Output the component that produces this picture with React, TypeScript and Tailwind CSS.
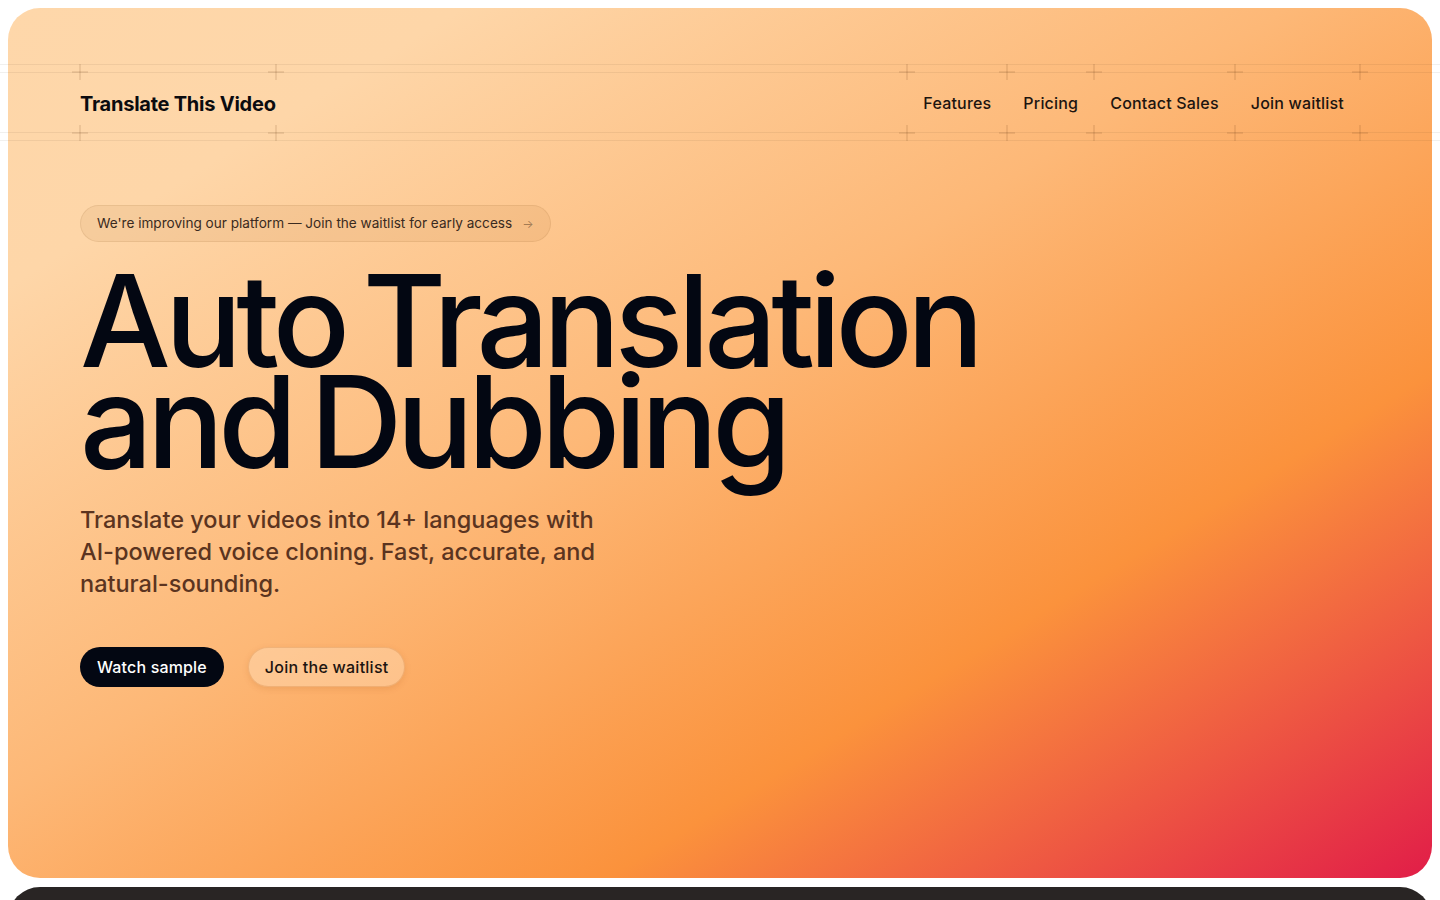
import React from 'react';

// small plus mark that sits on the header grid lines
const Cross = ({ className = '' }: { className?: string }) => (
    <span className={`pointer-events-none absolute h-4 w-4 ${className}`}>
        <span className="absolute left-1/2 top-0 h-4 w-px -translate-x-1/2 bg-[rgba(90,50,10,0.22)]" />
        <span className="absolute left-0 top-1/2 h-px w-4 -translate-y-1/2 bg-[rgba(90,50,10,0.22)]" />
    </span>
);

const Corners = ({ right = false }: { right?: boolean }) => (
    <>
        <Cross className="-left-2 -top-2" />
        <Cross className="-bottom-2 -left-2" />
        {right && <Cross className="-right-2 -top-2" />}
        {right && <Cross className="-bottom-2 -right-2" />}
    </>
);

const navItems = ['Features', 'Pricing', 'Contact Sales', 'Join waitlist'];

export default function App() {
    return (
        <div
            className="min-h-screen bg-white p-2 pb-0"
            style={{ fontFamily: 'Inter, "Noto Sans", sans-serif' }}
        >
            {/* ================= hero card ================= */}
            <section className="relative h-[870px] rounded-[32px] bg-[linear-gradient(to_bottom_right,#fed7aa_0%,#fed6a8_16%,#fdb877_45%,#fb923c_71%,#e11d48_100%)] px-[72px] pt-16">
                {/* header band with grid lines */}
                <header className="relative flex h-[61px] items-stretch justify-between">
                    <span className="pointer-events-none absolute -left-[80px] -right-[80px] -top-2 h-px bg-[rgba(60,40,20,0.07)]" />
                    <span className="pointer-events-none absolute -left-[80px] -right-[80px] top-0 h-px bg-[rgba(60,40,20,0.07)]" />
                    <span className="pointer-events-none absolute -left-[80px] -right-[80px] bottom-0 h-px bg-[rgba(60,40,20,0.07)]" />
                    <span className="pointer-events-none absolute -bottom-2 -left-[80px] -right-[80px] h-px bg-[rgba(60,40,20,0.07)]" />

                    <div className="relative flex items-center pt-[3px]">
                        <Corners right />
                        <span className="text-[20px] font-bold tracking-[-0.012em] text-[#0b0b0f]">Translate This Video</span>
                    </div>

                    <nav className="flex items-stretch">
                        {navItems.map((item, i) => (
                            <a
                                key={item}
                                href="#"
                                className="relative flex items-center px-4 text-base font-medium tracking-[0.012em] text-[#1c1410]"
                            >
                                <Corners right={i === navItems.length - 1} />
                                {item}
                            </a>
                        ))}
                    </nav>
                </header>

                {/* hero copy */}
                <div className="mt-[72px]">
                    <a
                        href="#"
                        className="inline-flex h-[37px] items-center gap-2.5 rounded-full border border-[rgba(120,70,20,0.1)] bg-[rgba(150,90,30,0.08)] pl-4 pr-4 text-[13.6px] text-[#3a2a20]"
                    >
                        <span>We're improving our platform — Join the waitlist for early access</span>
                        <span className="text-xs text-[rgba(60,40,20,0.45)]">→</span>
                    </a>

                    <h1 className="mt-[28px] text-[128px] font-medium leading-[0.79] tracking-[-0.045em] text-[#030712] [word-spacing:-10px]">
                        Auto Translation
                        <br />
                        and Dubbing
                    </h1>

                    <p className="mt-[32px] max-w-[530px] text-[23.5px] font-medium leading-8 text-[#5b3420]">
                        Translate your videos into 14+ languages with AI-powered voice cloning. Fast, accurate, and natural-sounding.
                    </p>

                    <div className="mt-[47px] flex items-center gap-6">
                        <button className="h-10 rounded-full bg-[#030712] px-[17px] text-base font-medium tracking-[0.01em] text-white">
                            Watch sample
                        </button>
                        <button className="h-10 rounded-full border border-[rgba(200,110,40,0.25)] bg-[rgba(255,235,210,0.35)] px-4 text-base font-medium tracking-[0.015em] text-[#1c1410] shadow-[0_2px_6px_rgba(160,80,20,0.15)]">
                            Join the waitlist
                        </button>
                    </div>
                </div>
            </section>

            {/* ================= next section (dark) ================= */}
            <section className="mt-[9px] h-[500px] rounded-t-[32px] bg-[#292524]" />
        </div>
    );
}
